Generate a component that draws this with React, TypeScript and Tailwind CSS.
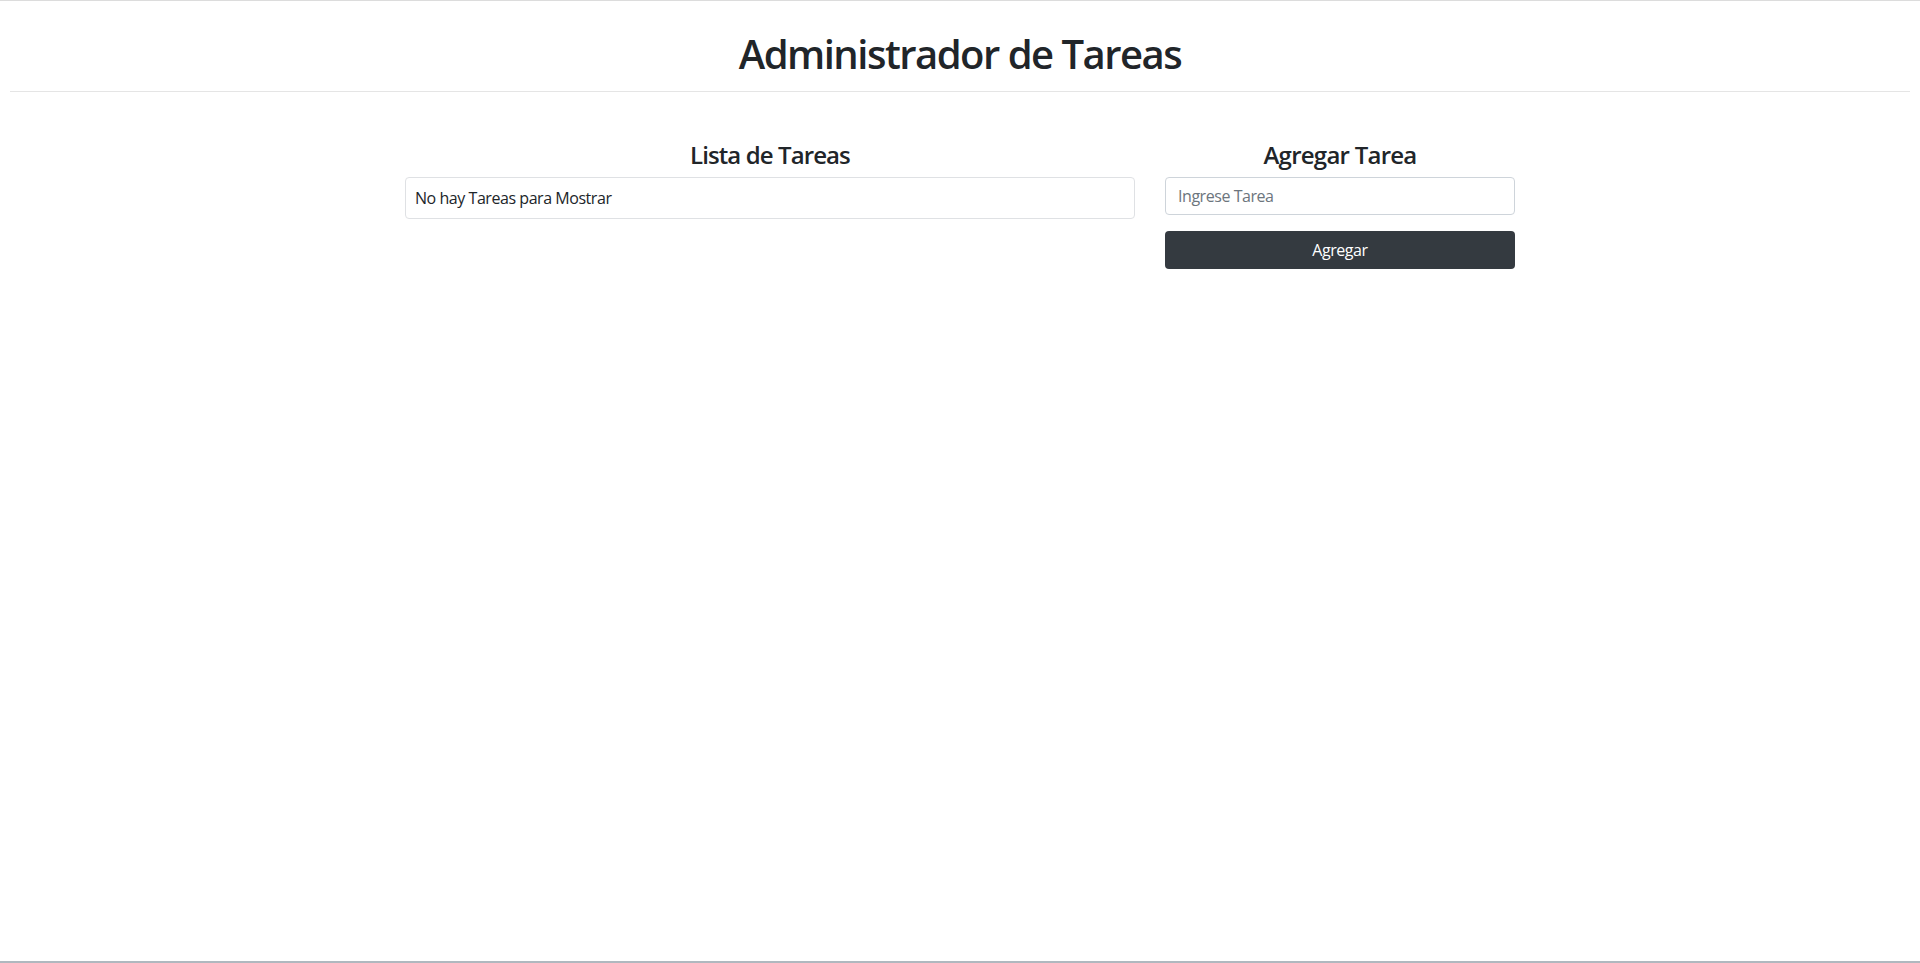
import React, { useState } from 'react';

const App: React.FC = () => {
  const [tareas, setTareas] = useState<string[]>([]);
  const [texto, setTexto] = useState('');

  const agregar = (e: React.FormEvent) => {
    e.preventDefault();
    if (!texto.trim()) return;
    setTareas([...tareas, texto.trim()]);
    setTexto('');
  };

  return (
    <div className="min-h-[963px] bg-white text-[#212529] border-t border-[#dcdcdc] flex flex-col font-['Open_Sans',sans-serif]">
      <header className="pt-[29px]">
        <h1 className="text-center text-[40px] leading-[48px] font-semibold tracking-[-1.5px]">
          Administrador de Tareas
        </h1>
        <hr className="mx-[10px] mt-[13px] border-t border-[#e5e5e5]" />
      </header>

      <main className="flex-1 w-[1140px] mx-auto px-[15px] pt-[48px]">
        <div className="flex gap-[30px]">
          {/* lista */}
          <section className="w-[730px]">
            <h3 className="text-center text-[24px] leading-[29px] font-semibold tracking-[-0.9px] mb-[8px]">
              Lista de Tareas
            </h3>
            <ul className="border border-[#dfe1e4] rounded-[4px]">
              {tareas.length === 0 ? (
                <li className="px-[9px] py-[8px] text-[16px] leading-[24px] tracking-[-0.45px]">
                  No hay Tareas para Mostrar
                </li>
              ) : (
                tareas.map((t, i) => (
                  <li
                    key={i}
                    className="px-[9px] py-[8px] text-[16px] leading-[24px] tracking-[-0.45px] border-b border-[#dfe1e4] last:border-b-0"
                  >
                    {t}
                  </li>
                ))
              )}
            </ul>
          </section>

          {/* formulario */}
          <section className="w-[350px]">
            <h3 className="text-center text-[24px] leading-[29px] font-semibold tracking-[-0.75px] mb-[8px]">
              Agregar Tarea
            </h3>
            <form onSubmit={agregar} className="flex flex-col">
              <input
                value={texto}
                onChange={(e) => setTexto(e.target.value)}
                placeholder="Ingrese Tarea"
                className="h-[38px] px-[12px] text-[16px] tracking-[-0.45px] border border-[#ced4da] rounded-[4px] outline-none placeholder:text-[#6c757d]"
              />
              <button
                type="submit"
                className="mt-[16px] h-[38px] rounded-[4px] bg-[#343a40] text-white text-[16px] tracking-[-0.45px]"
              >
                Agregar
              </button>
            </form>
          </section>
        </div>
      </main>

      <div className="h-[2px] bg-[#b0b8bf]" />
    </div>
  );
};

export default App;
